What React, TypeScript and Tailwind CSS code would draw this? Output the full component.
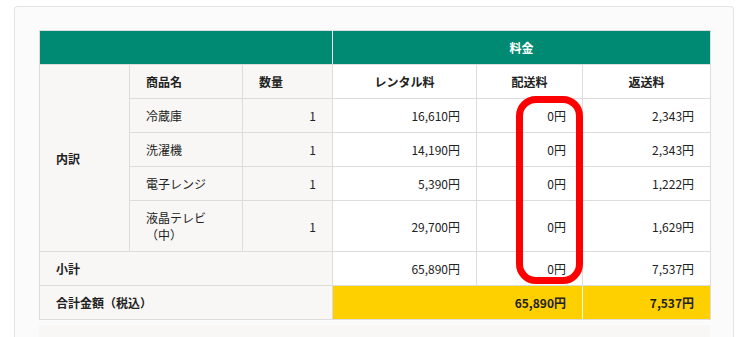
const items = [
  { name: "冷蔵庫", qty: 1, rental: "16,610円", ship: "0円", ret: "2,343円" },
  { name: "洗濯機", qty: 1, rental: "14,190円", ship: "0円", ret: "2,343円" },
  { name: "電子レンジ", qty: 1, rental: "5,390円", ship: "0円", ret: "1,222円" },
  { name: "液晶テレビ（中）", qty: 1, rental: "29,700円", ship: "0円", ret: "1,629円" },
];

const cell = "border border-[#dcdcdc] px-4 py-2 leading-[17px]";

export default function App() {
  return (
    <div className="bg-white pl-[14px] pt-[6px] font-['Noto_Sans_CJK_JP',sans-serif] text-[12px] text-[#222]">
      <div className="w-[720px] rounded-t-[4px] border border-b-0 border-[#e4e4e4] bg-[#fbfbfb] px-6 pt-[23px]">
        <div className="relative">
          <table className="w-[671px] table-fixed border-collapse">
            <colgroup>
              <col className="w-[90px]" />
              <col className="w-[113px]" />
              <col className="w-[90px]" />
              <col className="w-[144px]" />
              <col className="w-[106px]" />
              <col className="w-[128px]" />
            </colgroup>
            <thead>
              <tr className="bg-[#008a74]">
                <th colSpan={3} className="border border-[#dcdcdc] border-r-[#e8f0ee] py-2 leading-[17px]" />
                <th colSpan={3} className="border border-[#dcdcdc] border-l-[#e8f0ee] py-2 text-center font-bold leading-[17px] text-white">
                  料金
                </th>
              </tr>
            </thead>
            <tbody>
              <tr>
                <td rowSpan={5} className={`${cell} bg-[#f8f7f5] font-bold`}>内訳</td>
                <td className={`${cell} bg-[#f8f7f5] font-bold`}>商品名</td>
                <td className={`${cell} bg-[#f8f7f5] font-bold`}>数量</td>
                <td className={`${cell} bg-white text-center font-bold`}>レンタル料</td>
                <td className={`${cell} bg-white text-center font-bold`}>配送料</td>
                <td className={`${cell} bg-white text-center font-bold`}>返送料</td>
              </tr>
              {items.map((it) => (
                <tr key={it.name}>
                  <td className={`${cell} bg-[#f8f7f5]`}>{it.name}</td>
                  <td className={`${cell} bg-[#f8f7f5] text-right`}>{it.qty}</td>
                  <td className={`${cell} bg-white text-right`}>{it.rental}</td>
                  <td className={`${cell} bg-white text-right`}>{it.ship}</td>
                  <td className={`${cell} bg-white text-right`}>{it.ret}</td>
                </tr>
              ))}
              <tr>
                <td colSpan={3} className={`${cell} bg-[#f8f7f5] font-bold`}>小計</td>
                <td className={`${cell} bg-white text-right`}>65,890円</td>
                <td className={`${cell} bg-white text-right`}>0円</td>
                <td className={`${cell} bg-white text-right`}>7,537円</td>
              </tr>
              <tr>
                <td colSpan={3} className={`${cell} bg-[#f8f7f5] font-bold`}>合計金額（税込）</td>
                <td colSpan={2} className={`${cell} border-r-[#f4f4f4] bg-[#ffd000] text-right font-bold`}>65,890円</td>
                <td className={`${cell} bg-[#ffd000] text-right font-bold`}>7,537円</td>
              </tr>
            </tbody>
          </table>
          <div className="pointer-events-none absolute left-[477px] top-[66px] h-[188px] w-[67px] rounded-[20px] border-[7px] border-[#ff0000]" />
        </div>
        <div className="mt-[5px] h-[13px] w-[671px] bg-[#f8f7f5]" />
      </div>
    </div>
  );
}
